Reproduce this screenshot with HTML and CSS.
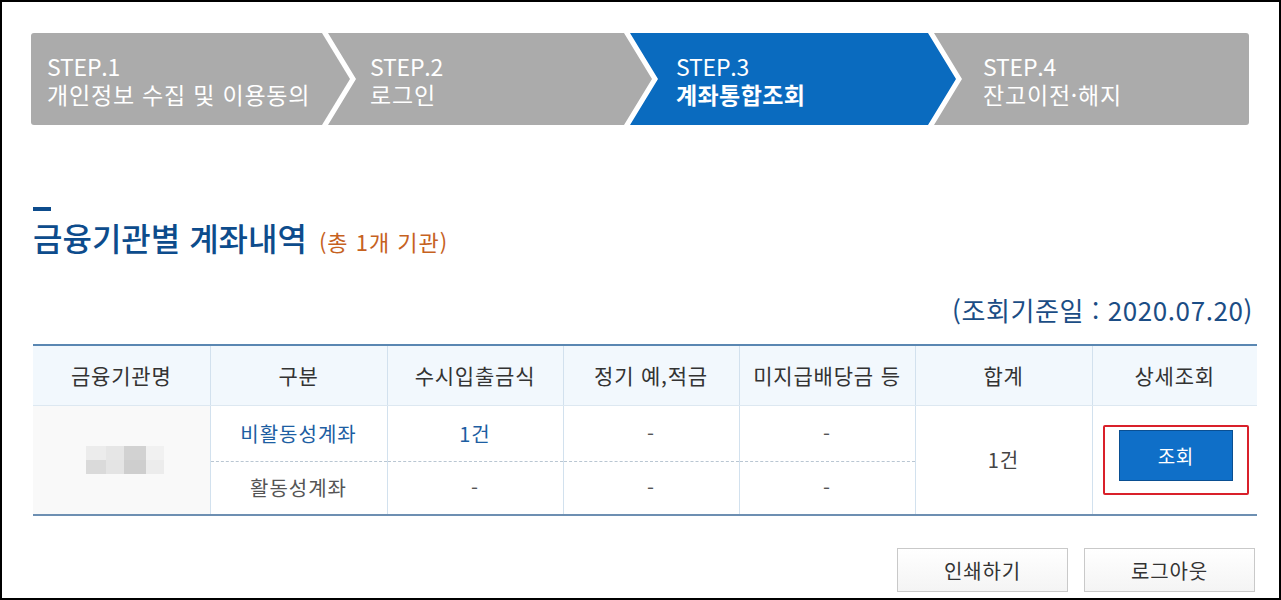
FILE: index.html
```html
<!DOCTYPE html>
<html lang="ko">
<head>
<meta charset="utf-8">
<title>계좌통합조회</title>
<link rel="stylesheet" href="styles.css">
</head>
<body>
<div class="frame">
  <div class="steps">
    <div class="step step-first">
      <span class="step-no">STEP.1</span>
      <span class="step-name">개인정보 수집 및 이용동의</span>
    </div>
    <div class="step step-mid step-2">
      <span class="step-no">STEP.2</span>
      <span class="step-name">로그인</span>
    </div>
    <div class="step step-mid step-3 step-on">
      <span class="step-no">STEP.3</span>
      <span class="step-name">계좌통합조회</span>
    </div>
    <div class="step step-last">
      <span class="step-no">STEP.4</span>
      <span class="step-name">잔고이전·해지</span>
    </div>
  </div>

  <h2 class="title">금융기관별 계좌내역 <span class="title-sub">(총 1개 기관)</span></h2>

  <p class="base-date">(조회기준일 : 2020.07.20)</p>

  <table class="acct">
    <colgroup>
      <col class="c1"><col class="c2"><col class="c3"><col class="c4"><col class="c5"><col class="c6"><col class="c7">
    </colgroup>
    <thead>
      <tr>
        <th>금융기관명</th>
        <th>구분</th>
        <th>수시입출금식</th>
        <th>정기 예,적금</th>
        <th>미지급배당금 등</th>
        <th>합계</th>
        <th>상세조회</th>
      </tr>
    </thead>
    <tbody>
      <tr class="r1">
        <td rowspan="2" class="bank">
          <div class="mosaic">
            <i class="m1"></i><i class="m2"></i><i class="m3"></i><i class="m4"></i>
            <i class="m5"></i><i class="m6"></i><i class="m7"></i><i class="m8"></i>
          </div>
        </td>
        <td class="dash blue">비활동성계좌</td>
        <td class="dash blue">1건</td>
        <td class="dash">-</td>
        <td class="dash">-</td>
        <td rowspan="2" class="total">1건</td>
        <td rowspan="2" class="detail">
          <div class="highlight"><button class="btn-view" type="button">조회</button></div>
        </td>
      </tr>
      <tr class="r2">
        <td>활동성계좌</td>
        <td>-</td>
        <td>-</td>
        <td>-</td>
      </tr>
    </tbody>
  </table>

  <div class="actions">
    <button class="btn-line" type="button">인쇄하기</button>
    <button class="btn-line" type="button">로그아웃</button>
  </div>
</div>
</body>
</html>
```
FILE: styles.css
```css
* { box-sizing: border-box; }

html, body {
  margin: 0;
  padding: 0;
  background: #fff;
}

body {
  font-family: "Noto Sans CJK KR", "Noto Sans", sans-serif;
  color: #333;
}

.frame {
  width: 1281px;
  height: 600px;
  border: 2px solid #000;
  padding: 31px 24px 0 29px;
  overflow: hidden;
}

/* steps */
.steps {
  display: flex;
  height: 92px;
  margin-right: 6px;
}

.step {
  display: flex;
  flex-direction: column;
  justify-content: center;
  padding-top: 1px;
  background: #ababab;
  color: #fff;
  font-size: 23px;
  line-height: 28px;
}

.step-no,
.step-name {
  display: block;
  height: 28px;
  line-height: 28px;
}

.step-no {
  letter-spacing: -0.2px;
}

.step-name {
  letter-spacing: 0.8px;
}

.step-first {
  width: 319px;
  padding-left: 16px;
  border-radius: 3px 0 0 3px;
  clip-path: polygon(0 0, calc(100% - 28px) 0, 100% 50%, calc(100% - 28px) 100%, 0 100%);
}

.step-mid {
  margin-left: -22px;
  clip-path: polygon(0 0, calc(100% - 28px) 0, 100% 50%, calc(100% - 28px) 100%, 0 100%, 28px 50%);
}

.step-2 { width: 324px; padding-left: 42px; }
.step-3 { width: 326px; padding-left: 46px; }

.step-last {
  width: 315px;
  margin-left: -22px;
  padding-left: 49px;
  border-radius: 0 3px 3px 0;
  clip-path: polygon(0 0, 100% 0, 100% 100%, 0 100%, 28px 50%);
}

.step-on {
  background: #0a6bbf;
}

.step-on .step-name {
  font-weight: 700;
  letter-spacing: 0.4px;
}

/* heading */
.title {
  margin: 82px 0 0 2px;
  font-size: 32px;
  line-height: 36px;
  font-weight: 500;
  color: #0d4c8c;
  letter-spacing: 0;
}

.title::before {
  content: "";
  display: block;
  width: 18px;
  height: 4px;
  margin-bottom: 8px;
  background: #0d4c8c;
}

.title-sub {
  font-size: 22px;
  font-weight: 400;
  color: #c6621f;
  margin-left: 3px;
  letter-spacing: 1px;
}

.base-date {
  margin: 36px 2px 0 0;
  text-align: right;
  font-size: 26px;
  line-height: 30px;
  color: #1b4d85;
  letter-spacing: 0.6px;
}

/* table */
.acct {
  width: 1224px;
  margin-top: 19px;
  margin-left: 2px;
  border-collapse: collapse;
  table-layout: fixed;
  border-top: 2px solid #5a87b2;
  border-bottom: 2px solid #6d8fb2;
}

.c1, .c2, .c6 { width: 177px; }
.c3, .c4, .c5 { width: 176px; }
.c7 { width: 165px; }

.acct th,
.acct td {
  text-align: center;
  vertical-align: middle;
  border-left: 1px solid #d2e1ee;
  font-size: 20px;
  letter-spacing: 1px;
  padding: 0;
}

.acct th:first-child,
.acct td.bank { border-left: none; }

.acct th {
  height: 60px;
  background: #f2f8fd;
  font-weight: 400;
  font-size: 21px;
  letter-spacing: 0.8px;
  color: #333;
  border-bottom: 1px solid #dde8f1;
}

.acct td {
  color: #555;
}

.r1 td { height: 56px; }
.r2 td { height: 54px; }

.acct td.dash {
  border-bottom: 1px dashed #b9c6d2;
}

.acct td.blue {
  color: #1d5ea2;
}

.acct td.bank {
  background: #f9f9f9;
}

.acct td.total {
  color: #444;
}

.mosaic {
  display: grid;
  grid-template-columns: 20px 18px 22px 18px;
  grid-template-rows: 14px 14px;
  width: 78px;
  margin: 0 auto 0 53px;
  filter: blur(0.6px);
}

.mosaic i { display: block; }
.m1 { background: #ececec; }
.m2 { background: #e6e6e6; }
.m3 { background: #d2d2d2; }
.m4 { background: #f1f1f1; }
.m5 { background: #dadada; }
.m6 { background: #e4e4e4; }
.m7 { background: #cecece; }
.m8 { background: #ececec; }

.highlight {
  display: inline-flex;
  padding: 3px 14px 12px 14px;
  border: 2px solid #d9202a;
  border-radius: 2px;
  margin-left: 2px;
}

.btn-view {
  width: 114px;
  height: 51px;
  border: 1px solid #0a4f92;
  background: #0f6fc8;
  color: #fff;
  font-family: "Noto Sans CJK KR", "Noto Sans", sans-serif;
  font-size: 19px;
  letter-spacing: 0.5px;
  padding: 0;
}

/* bottom buttons */
.actions {
  display: flex;
  justify-content: flex-end;
  gap: 16px;
  margin-top: 32px;
}

.btn-line {
  width: 171px;
  height: 44px;
  border: 1px solid #c9c9c9;
  background: linear-gradient(#ffffff, #f4f4f4);
  color: #333;
  font-family: "Noto Sans CJK KR", "Noto Sans", sans-serif;
  font-size: 20px;
  letter-spacing: 0.8px;
  padding: 0;
}
```
